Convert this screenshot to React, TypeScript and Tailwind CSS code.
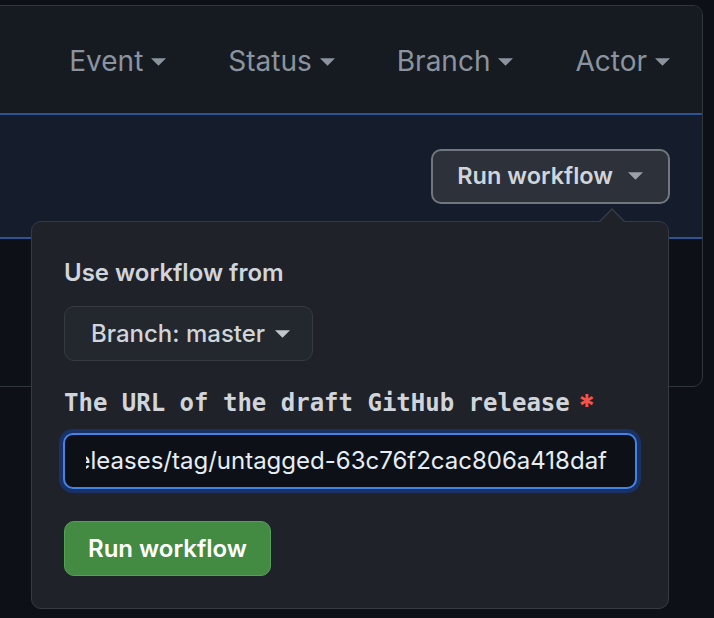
import React from "react";

const SANS = "font-['Inter','Noto_Sans',sans-serif]";

function Caret({ className = "" }: { className?: string }) {
  return (
    <svg viewBox="0 0 16 8" className={className} fill="currentColor" aria-hidden>
      <path d="M0 0h16L8 8z" />
    </svg>
  );
}

function FilterItem({ label }: { label: string }) {
  return (
    <div className="flex items-center gap-[8px] text-[28px] text-[#8b949e]">
      <span>{label}</span>
      <Caret className="w-[15px] h-[8px] mt-[3px]" />
    </div>
  );
}

export default function App() {
  return (
    <div className={`relative w-[714px] h-[618px] overflow-hidden bg-[#0d1117] ${SANS}`}>
      {/* Workflow runs box */}
      <div className="pt-[5px] pr-[11px] -ml-[12px]">
        <div className="h-[382px] rounded-[10px] border border-[#30363d] bg-[#0d1117] overflow-hidden">
          <div className="h-[107px] bg-[#161b22] flex items-center justify-end gap-[62px] pr-[32px] pt-[2px]">
            <FilterItem label="Event" />
            <FilterItem label="Status" />
            <FilterItem label="Branch" />
            <FilterItem label="Actor" />
          </div>
          <div className="h-[126px] bg-[#151c2b] border-y-[2px] border-[#2c5394] flex items-center justify-end pr-[32px]">
            <button className="h-[55px] flex items-center gap-[15px] pl-[24px] pr-[25px] rounded-[10px] border-2 border-[#72777f] bg-[#2d3139] text-[23.5px] font-semibold text-[#d0d5dc]">
              <span>Run workflow</span>
              <Caret className="w-[15px] h-[8px] text-[#9aa1aa]" />
            </button>
          </div>
        </div>
      </div>

      {/* Caret of the popover */}
      <div className="absolute left-[598px] top-[208px] w-0 h-0 border-x-[14px] border-x-transparent border-b-[14px] border-b-[#363a42]" />
      <div className="absolute left-[599px] top-[210px] w-0 h-0 border-x-[13px] border-x-transparent border-b-[13px] border-b-[#1f2229] z-10" />

      {/* Popover */}
      <div className="absolute left-[31px] top-[221px] w-[638px] h-[388px] rounded-[10px] border border-[#363a42] bg-[#1f2229] pl-[32px] pt-[33px]">
        <div className="text-[24px] leading-[36px] font-semibold text-[#d0d5dc]">Use workflow from</div>
        <button className="mt-[15px] h-[55px] w-[249px] flex items-center pl-[26px] gap-[10px] rounded-[10px] border border-[#363b43] bg-[#23272e] text-[24px] font-medium text-[#d0d5dc]">
          <span>Branch: master</span>
          <Caret className="w-[15px] h-[8px] text-[#c0c6ce]" />
        </button>
        <div className="mt-[22px] flex items-center text-[24px] leading-[36px]">
          <span className="font-['DejaVu_Sans_Mono',monospace] font-bold text-[#d0d5dc]">
            The URL of the draft GitHub release
          </span>
          <span className="ml-[8px] text-[#f85149] font-bold text-[32px] leading-none mt-[8px]">*</span>
        </div>
        <div className="mt-[6px] w-[582px] rounded-[14px] p-[4px] -ml-[5px] bg-[#1a3166]">
          <div className="h-[56px] rounded-[10px] border-2 border-[#4184e4] bg-[#0d1117] flex items-center pl-[21px] pr-[28px]">
            <div className="flex-1 overflow-hidden flex justify-end">
              <span className="whitespace-nowrap text-[24px] text-[#e6edf3]">
                https://github.com/owner/repo/releases/tag/untagged-63c76f2cac806a418daf
              </span>
            </div>
          </div>
        </div>
        <button className="mt-[28px] h-[55px] w-[207px] rounded-[10px] border border-[#55a155] bg-[#438a43] text-[24px] font-semibold text-white">
          Run workflow
        </button>
      </div>
    </div>
  );
}
